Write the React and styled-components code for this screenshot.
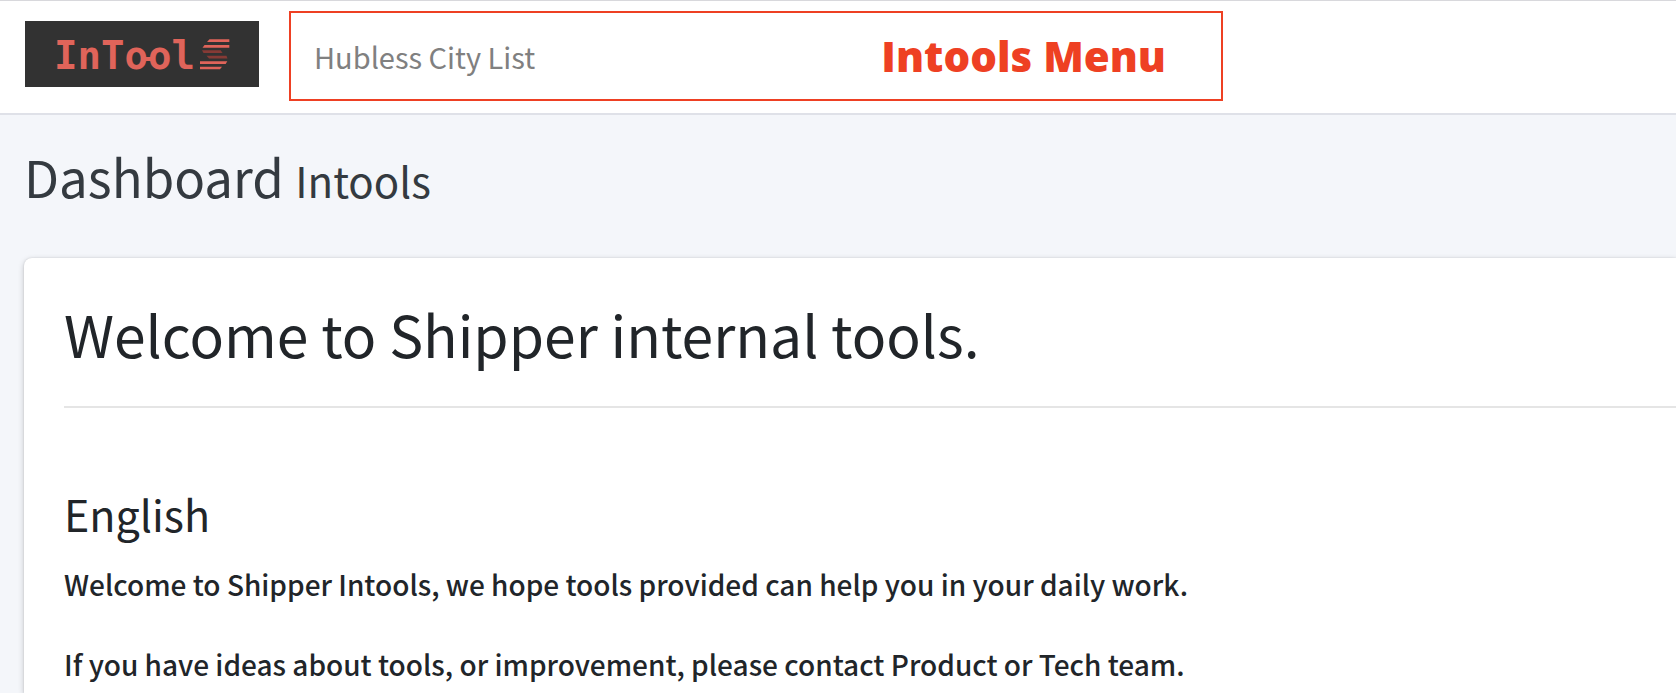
import React from "react";
import styled, { createGlobalStyle } from "styled-components";

const GlobalStyle = createGlobalStyle`
  *, *::before, *::after { box-sizing: border-box; }
  body {
    margin: 0;
    background: #f4f6fa;
    color: #212529;
    font-family: "Noto Sans CJK SC", "Noto Sans", sans-serif;
    font-size: 28px;
    font-weight: 500;
    line-height: 48px;
  }
`;

const Page = styled.div`
  display: flex;
  flex-direction: column;
  min-height: 100vh;
`;

const Header = styled.header`
  display: flex;
  align-items: flex-start;
  padding: 10px 24px 12px 25px;
  background: #fff;
  border-top: 1px solid #d8d8dc;
  border-bottom: 2px solid #dfe1e8;
`;

const Brand = styled.a`
  flex: none;
  display: block;
  margin: 10px 30px 14px 0;
  background: #323232;

  svg { display: block; }
`;

const Menu = styled.nav`
  flex: 0 1 934px;
  display: flex;
  align-items: center;
  justify-content: space-between;
  min-height: 90px;
  padding: 0 55px 0 23px;
  border: 2px solid #ee4023;
`;

const MenuLink = styled.a`
  color: #808080;
  font-size: 29px;
  font-weight: 400;
  text-decoration: none;
`;

const MenuLabel = styled.strong`
  color: #ee4023;
  font-family: "Open Sans", Lato, sans-serif;
  font-size: 42px;
  font-weight: 800;
`;

const Main = styled.main`
  flex: 1;
  display: flex;
  flex-direction: column;
  padding: 30px 0 0 24px;
`;

const PageTitle = styled.h1`
  margin: 0 0 51px;
  color: #343a40;
  font-size: 51px;
  font-weight: 400;
  line-height: 62px;

  small {
    font-size: 42px;
    line-height: 1;
  }
`;

const Card = styled.section`
  flex: 1;
  padding: 40px 0 2px 40px;
  background: #fff;
  border-top-left-radius: 8px;
  box-shadow: 0 0 2px rgba(0, 0, 0, 0.13), 0 2px 6px rgba(0, 0, 0, 0.2);
`;

const Welcome = styled.h2`
  margin: 0;
  font-size: 57px;
  font-weight: 400;
  line-height: 70px;
`;

const Divider = styled.hr`
  margin: 38px 0 76px;
  border: 0;
  border-top: 2px solid #e5e5e5;
`;

const Language = styled.h3`
  margin: 0 0 18px;
  font-size: 43px;
  font-weight: 400;
  line-height: 58px;
`;

const Text = styled.p`
  margin: 0;

  & + & { margin-top: 32px; }
`;

function Logo() {
  return (
    <svg width="234" height="66" viewBox="0 0 234 66" role="img" aria-label="InTools">
      <text x="29" y="48" fill="#e0645a" fontFamily="DejaVu Sans Mono, monospace" fontSize="39" fontWeight="700">
        InTool
      </text>
      <rect x="119" y="36" width="8" height="4" fill="#e0645a" />
      <g fill="#e0645a">
        <path d="M184.5 18.3H204.3V21H182Z" />
        <path d="M179.5 24H204.3V26.7H177.5Z" />
        <path d="M175 40.3H202.3L200.7 43H175Z" />
        <path d="M175 45.7H197L195 48.3H175Z" />
      </g>
      <g fill="#863a35">
        <path d="M177 29.3H195.7L197.5 32H178.5Z" />
        <path d="M181.5 34.7H201.5L202.5 37.5H184Z" />
      </g>
    </svg>
  );
}

export default function App() {
  return (
    <Page>
      <GlobalStyle />
      <Header>
        <Brand href="#"><Logo /></Brand>
        <Menu>
          <MenuLink href="#hubless">Hubless City List</MenuLink>
          <MenuLabel>Intools Menu</MenuLabel>
        </Menu>
      </Header>
      <Main>
        <PageTitle>Dashboard <small>Intools</small></PageTitle>
        <Card>
          <Welcome>Welcome to Shipper internal tools.</Welcome>
          <Divider />
          <Language>English</Language>
          <Text>Welcome to Shipper Intools, we hope tools provided can help you in your daily work.</Text>
          <Text>If you have ideas about tools, or improvement, please contact Product or Tech team.</Text>
        </Card>
      </Main>
    </Page>
  );
}
